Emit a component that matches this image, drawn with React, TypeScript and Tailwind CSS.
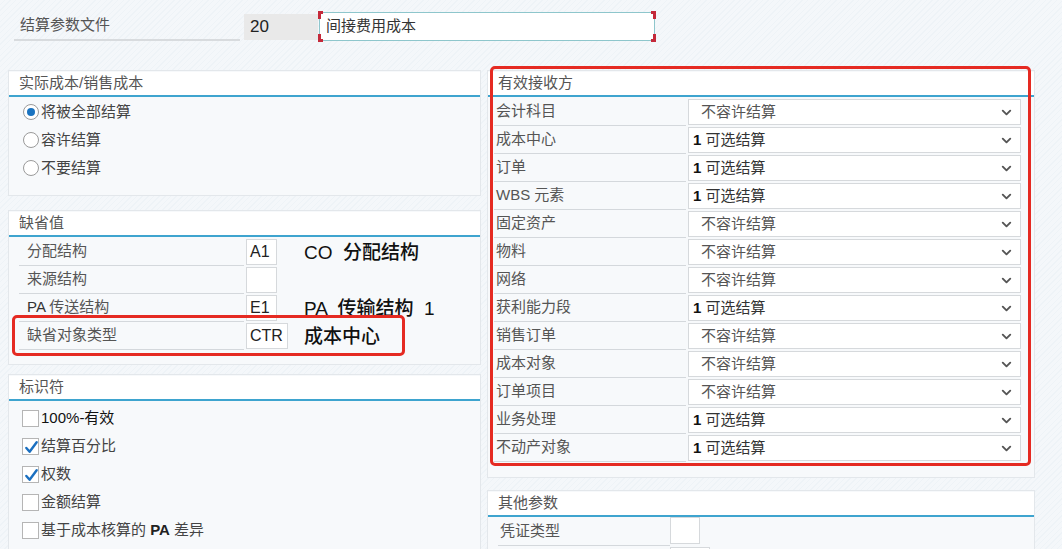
import { ChevronDown } from "lucide-react";

const FONT = "font-['Liberation_Sans','Noto_Sans_CJK_SC',sans-serif]";

const receivers: [string, string][] = [
  ["会计科目", "no"],
  ["成本中心", "opt"],
  ["订单", "opt"],
  ["WBS 元素", "opt"],
  ["固定资产", "no"],
  ["物料", "no"],
  ["网络", "no"],
  ["获利能力段", "opt"],
  ["销售订单", "no"],
  ["成本对象", "no"],
  ["订单项目", "no"],
  ["业务处理", "opt"],
  ["不动产对象", "opt"],
];

function Header({ title }: { title: string }) {
  return (
    <div className="h-[25px] bg-white border-b-2 border-[#3ea4cf] flex items-end pl-[10px] pb-[1px] text-[15px] text-[#555]">
      {title}
    </div>
  );
}

function Radio({ checked, label }: { checked?: boolean; label: string }) {
  return (
    <div className="h-[28px] flex items-center pl-[14px] text-[15px] text-[#444]">
      <span className="w-[16px] h-[16px] rounded-full border border-[#9a9a9a] bg-white flex items-center justify-center mr-[2px]">
        {checked ? <span className="w-[8px] h-[8px] rounded-full bg-[#1a73c0]" /> : null}
      </span>
      {label}
    </div>
  );
}

function Check({ checked, label }: { checked?: boolean; label: React.ReactNode }) {
  return (
    <div className="h-[28px] flex items-center pl-[13px] text-[15px] text-[#444]">
      <span className="relative w-[17px] h-[17px] border border-[#b5b5b5] bg-white mr-[2px]">
        {checked ? (
          <svg viewBox="0 0 16 16" className="absolute left-[1px] top-[1px] w-[15px] h-[15px]">
            <path d="M2.5 8.5 L6 12.5 L13.5 2.5" fill="none" stroke="#1a6fc0" strokeWidth="2.6" strokeLinecap="round" strokeLinejoin="round" />
          </svg>
        ) : null}
      </span>
      {label}
    </div>
  );
}

function DefaultRow({ label, code, desc, wide }: { label: React.ReactNode; code: string; desc?: React.ReactNode; wide?: boolean }) {
  return (
    <div className="h-[28px] flex items-center">
      <div className="w-[225px] h-[27px] ml-[10px] border-b border-[#d4d8dc] flex items-center pl-[8px] text-[15px] text-[#555]">
        {label}
      </div>
      <div
        className={`ml-[2px] ${wide ? "w-[42px]" : "w-[31px]"} h-[26px] bg-white border border-[#d6d9dc] flex items-center pl-[3px] text-[16px] font-medium text-[#222]`}
      >
        {code}
      </div>
      <div className={`${wide ? "ml-[16px]" : "ml-[27px]"} text-[19px] font-medium text-[#111] whitespace-pre leading-none`}>{desc}</div>
    </div>
  );
}

function ReceiverRow({ label, kind }: { label: string; kind: string }) {
  return (
    <div className="h-[28px] flex items-center">
      <div className="w-[192px] h-[27px] ml-[6px] border-b border-[#d4d8dc] flex items-center pl-[2px] text-[15px] text-[#555]">
        {label}
      </div>
      <div className="ml-[2px] w-[333px] h-[26px] bg-white border border-[#d6d9dc] flex items-center pl-[4px] pr-[6px] text-[15px]">
        {kind === "opt" ? (
          <span className="text-[#333]">
            <span className="font-bold text-[#111]">1</span> 可选结算
          </span>
        ) : (
          <span className="text-[#555] pl-[8px]">不容许结算</span>
        )}
        <ChevronDown className="ml-auto w-[15px] h-[15px] text-[#555]" strokeWidth={3} />
      </div>
    </div>
  );
}

export default function App() {
  return (
    <div className={`${FONT} w-[1062px] h-[549px] overflow-hidden bg-[#f1f5f9] bg-[repeating-linear-gradient(135deg,#f4f7fa_0px,#f4f7fa_3px,#eef3f7_3px,#eef3f7_4px)]`}>
      {/* top row */}
      <div className="flex items-start pt-[12px] pl-[14px]">
        <div className="w-[226px] h-[29px] border-b-2 border-[#d8dbde] flex items-center pl-[6px] text-[15px] text-[#555]">
          结算参数文件
        </div>
        <div className="mt-[2px] ml-[4px] w-[74px] h-[26px] bg-[#e9e9e9] flex items-center pl-[6px] text-[17px] text-[#222]">
          20
        </div>
        <div className="relative ml-[1px] w-[336px] h-[29px] bg-white border border-[#8ec6cc] flex items-center pl-[6px] text-[15px] text-[#333]">
          间接费用成本
          <span className="absolute -left-[2px] -top-[2px] w-[5px] h-[8px] border-l-[3px] border-t-[3px] border-[#c4293a]" />
          <span className="absolute -left-[2px] -bottom-[2px] w-[5px] h-[8px] border-l-[3px] border-b-[3px] border-[#c4293a]" />
          <span className="absolute -right-[2px] -top-[2px] w-[5px] h-[8px] border-r-[3px] border-t-[3px] border-[#c4293a]" />
          <span className="absolute -right-[2px] -bottom-[2px] w-[5px] h-[8px] border-r-[3px] border-b-[3px] border-[#c4293a]" />
        </div>
      </div>

      <div className="flex items-start mt-[29px] pl-[8px] gap-[6px]">
        {/* left column */}
        <div className="w-[473px] flex flex-col">
          <div className="h-[126px] bg-[#f7f9fb] border border-[#e3e7eb] pt-[1px]">
            <Header title="实际成本/销售成本" />
            <div className="pt-[1px]">
              <Radio checked label="将被全部结算" />
              <Radio label="容许结算" />
              <Radio label="不要结算" />
            </div>
          </div>

          <div className="relative mt-[14px] h-[155px] bg-[#f7f9fb] border border-[#e3e7eb] pt-[1px]">
            <Header title="缺省值" />
            <div className="pt-[1px]">
              <DefaultRow label="分配结构" code="A1" desc="CO  分配结构" />
              <DefaultRow label="来源结构" code="" />
              <DefaultRow label={<span><span className="text-[#333]">PA</span> 传送结构</span>} code="E1" desc="PA  传输结构  1" />
              <DefaultRow label="缺省对象类型" code="CTR" desc="成本中心" wide />
            </div>
            <div className="absolute left-[3px] top-[104px] w-[393px] h-[41px] border-[3px] border-[#e52a22] rounded-[5px]" />
          </div>

          <div className="mt-[9px] h-[180px] bg-[#f7f9fb] border border-[#e3e7eb] pt-[1px]">
            <Header title="标识符" />
            <div className="pt-[3px]">
              <Check label={<span className="text-[#111]"><span className="font-medium">100%</span>-有效</span>} />
              <Check checked label="结算百分比" />
              <Check checked label="权数" />
              <Check label="金额结算" />
              <Check label={<span>基于成本核算的 <span className="font-bold text-[#222]">PA</span> 差异</span>} />
            </div>
          </div>
        </div>

        {/* right column */}
        <div className="w-[548px] flex flex-col">
          <div className="relative h-[408px] bg-[#f7f9fb] border border-[#e3e7eb] pt-[1px]">
            <Header title="有效接收方" />
            <div className="pt-[1px]">
              {receivers.map(([l, k]) => (
                <ReceiverRow key={l} label={l} kind={k} />
              ))}
            </div>
            <div className="absolute left-[2px] -top-[5px] w-[541px] h-[400px] border-[3px] border-[#e52a22] rounded-[5px]" />
          </div>

          <div className="mt-[12px] h-[80px] bg-[#f7f9fb] border border-[#e3e7eb] pt-[1px]">
            <Header title="其他参数" />
            <div className="h-[30px] flex items-center">
              <div className="w-[172px] h-[27px] ml-[10px] border-b border-[#d4d8dc] flex items-center pl-[2px] text-[15px] text-[#555]">
                凭证类型
              </div>
              <div className="mt-[-4px] w-[30px] h-[27px] bg-white border border-[#d6d9dc]" />
            </div>
            <div className="ml-[182px] w-[40px] h-[20px] bg-white border border-[#d6d9dc]" />
          </div>
        </div>
      </div>
    </div>
  );
}
